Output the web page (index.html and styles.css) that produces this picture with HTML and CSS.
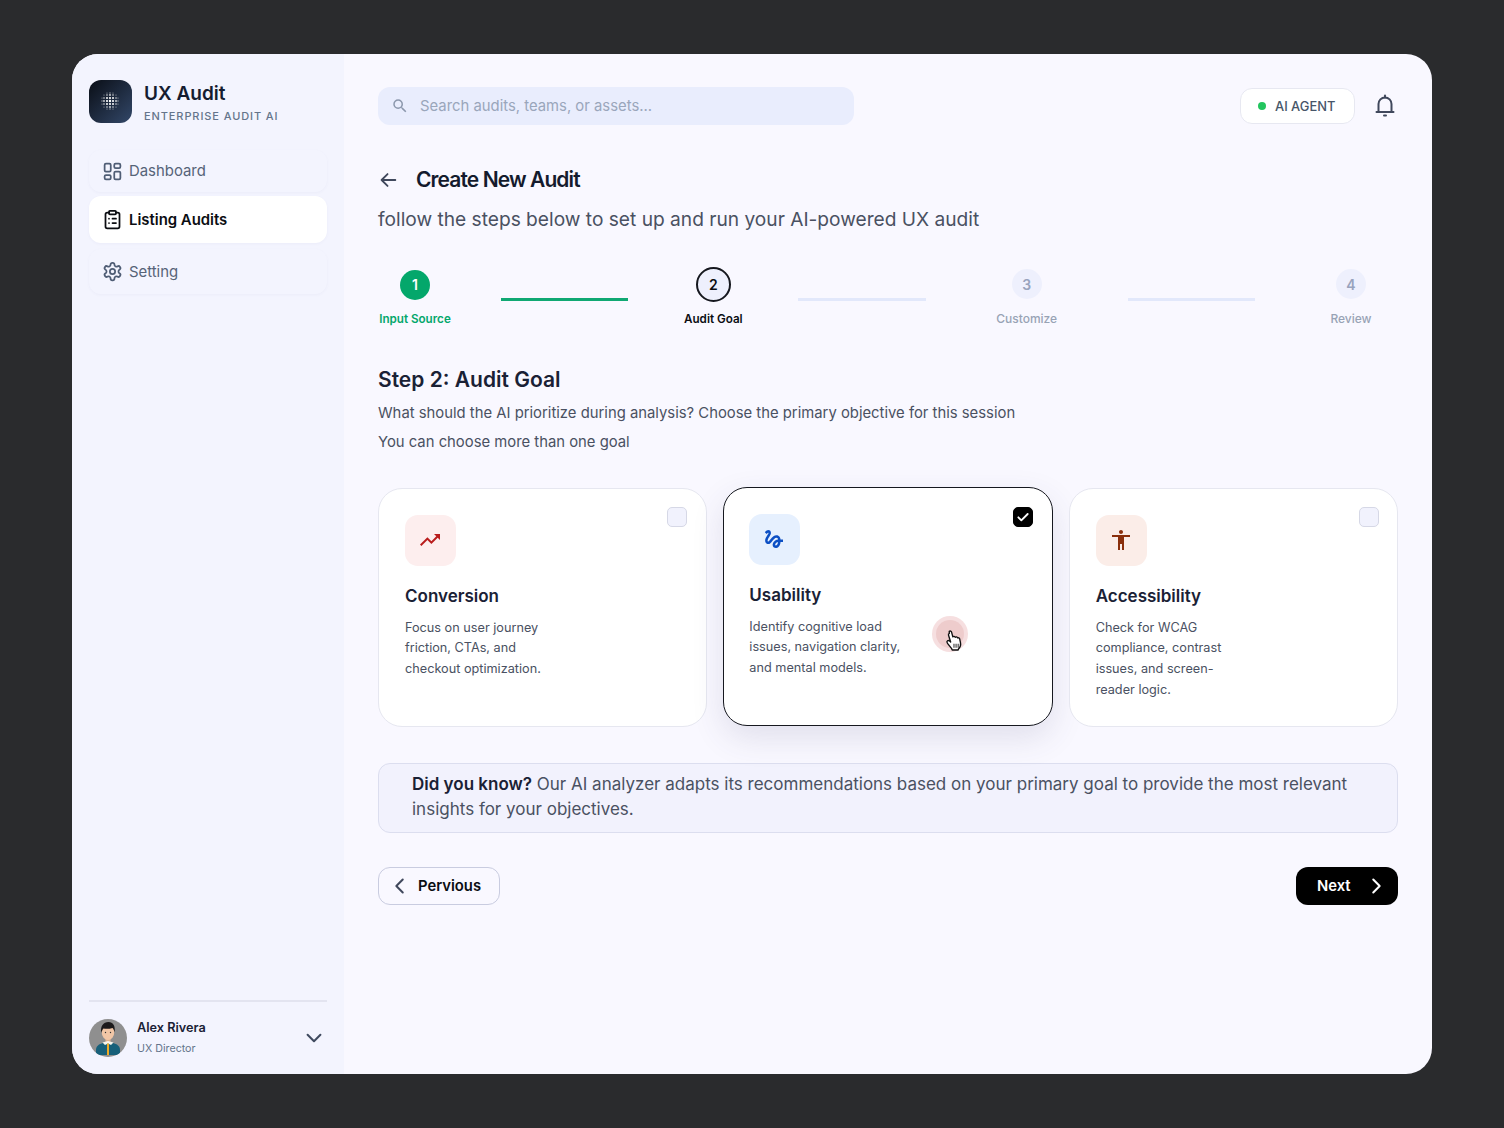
FILE: index.html
```html
<!DOCTYPE html>
<html lang="en">
<head>
<meta charset="utf-8">
<title>UX Audit</title>
<link rel="stylesheet" href="styles.css">
</head>
<body>
<div class="app">
  <aside class="sidebar">
    <div class="brand">
      <div class="logo">
        <svg width="20" height="20" viewBox="0 0 20 20" fill="#fff">
          <g opacity=".6"><circle cx="7" cy="2" r=".6"/><circle cx="10" cy="2" r=".7"/><circle cx="13" cy="2" r=".6"/><circle cx="4" cy="4" r=".6"/><circle cx="16" cy="4" r=".6"/><circle cx="2" cy="7" r=".6"/><circle cx="18" cy="7" r=".6"/><circle cx="2" cy="10" r=".7"/><circle cx="18" cy="10" r=".7"/><circle cx="2" cy="13" r=".6"/><circle cx="18" cy="13" r=".6"/><circle cx="4" cy="16" r=".6"/><circle cx="16" cy="16" r=".6"/><circle cx="7" cy="18" r=".6"/><circle cx="10" cy="18" r=".7"/><circle cx="13" cy="18" r=".6"/></g>
          <g opacity=".85"><circle cx="7" cy="4" r=".8"/><circle cx="10" cy="4" r=".9"/><circle cx="13" cy="4" r=".8"/><circle cx="4" cy="7" r=".8"/><circle cx="16" cy="7" r=".8"/><circle cx="4" cy="10" r=".9"/><circle cx="16" cy="10" r=".9"/><circle cx="4" cy="13" r=".8"/><circle cx="16" cy="13" r=".8"/><circle cx="7" cy="16" r=".8"/><circle cx="10" cy="16" r=".9"/><circle cx="13" cy="16" r=".8"/></g>
          <circle cx="7" cy="7" r="1"/><circle cx="10" cy="7" r="1.1"/><circle cx="13" cy="7" r="1"/><circle cx="7" cy="10" r="1.1"/><circle cx="10" cy="10" r="1.2"/><circle cx="13" cy="10" r="1.1"/><circle cx="7" cy="13" r="1"/><circle cx="10" cy="13" r="1.1"/><circle cx="13" cy="13" r="1"/>
        </svg>
      </div>
      <div class="brand-text">
        <div class="brand-name">UX Audit</div>
        <div class="brand-sub">ENTERPRISE AUDIT AI</div>
      </div>
    </div>
    <nav class="nav">
      <a class="nav-item nav-dash">
        <svg class="nav-icon" viewBox="0 0 24 24"><rect x="3" y="3" width="7" height="9" rx="1.5"/><rect x="14" y="3" width="7" height="5" rx="1.5"/><rect x="14" y="12" width="7" height="9" rx="1.5"/><rect x="3" y="16" width="7" height="5" rx="1.5"/></svg>
        <span>Dashboard</span>
      </a>
      <a class="nav-item nav-active">
        <svg class="nav-icon" viewBox="0 0 24 24"><rect x="8" y="2" width="8" height="4" rx="1"/><path d="M16 4h2a2 2 0 0 1 2 2v14a2 2 0 0 1-2 2H6a2 2 0 0 1-2-2V6a2 2 0 0 1 2-2h2"/><path d="M12 11h4M12 16h4M8 11h.01M8 16h.01"/></svg>
        <span>Listing Audits</span>
      </a>
      <a class="nav-item nav-set">
        <svg class="nav-icon" viewBox="0 0 24 24"><path d="M12.22 2h-.44a2 2 0 0 0-2 2v.18a2 2 0 0 1-1 1.73l-.43.25a2 2 0 0 1-2 0l-.15-.08a2 2 0 0 0-2.73.73l-.22.38a2 2 0 0 0 .73 2.73l.15.1a2 2 0 0 1 1 1.72v.51a2 2 0 0 1-1 1.74l-.15.09a2 2 0 0 0-.73 2.73l.22.38a2 2 0 0 0 2.73.73l.15-.08a2 2 0 0 1 2 0l.43.25a2 2 0 0 1 1 1.73V20a2 2 0 0 0 2 2h.44a2 2 0 0 0 2-2v-.18a2 2 0 0 1 1-1.73l.43-.25a2 2 0 0 1 2 0l.15.08a2 2 0 0 0 2.73-.73l.22-.39a2 2 0 0 0-.73-2.73l-.15-.08a2 2 0 0 1-1-1.74v-.5a2 2 0 0 1 1-1.74l.15-.09a2 2 0 0 0 .73-2.73l-.22-.38a2 2 0 0 0-2.73-.73l-.15.08a2 2 0 0 1-2 0l-.43-.25a2 2 0 0 1-1-1.73V4a2 2 0 0 0-2-2z"/><circle cx="12" cy="12" r="3"/></svg>
        <span>Setting</span>
      </a>
    </nav>
    <div class="user">
      <svg class="avatar" viewBox="0 0 38 38">
        <defs><clipPath id="av"><circle cx="19" cy="19" r="19"/></clipPath></defs>
        <g clip-path="url(#av)">
          <rect width="38" height="38" fill="#8f8f8f"/>
          <path d="M7 36v-5c0-4 3-6 7-7l5-1 5 1c4 1 7 3 7 7v5z" fill="#17607a"/>
          <rect x="16.500" y="18" width="5" height="5" fill="#e2b08f"/>
          <path d="M13.500 23.500l5.500-1.500 5.500 1.500-2.500 2.500L19 24.500 16 26z" fill="#f7f4ec"/>
          <rect x="18" y="24.500" width="2" height="11.500" fill="#efab26"/>
          <ellipse cx="19" cy="13" rx="6.300" ry="8" fill="#f1c6a6"/>
          <path d="M12.300 14c-1.200-7 2-11 7.200-11 4.500 0 7 3.500 6.200 10.500-.5-2-1.200-3.500-2.200-4.500-3 1-7 1-9 .5-1 1-1.700 2.500-2.200 4.500z" fill="#1c1a1b"/>
          <circle cx="16.500" cy="13.500" r=".7" fill="#333"/><circle cx="21.500" cy="13.500" r=".7" fill="#333"/>
        </g>
      </svg>
      <div class="user-text">
        <div class="user-name">Alex Rivera</div>
        <div class="user-role">UX Director</div>
      </div>
      <svg class="user-chev" viewBox="0 0 24 24"><path d="M5 8.500l7 7 7-7"/></svg>
    </div>
  </aside>

  <main class="main">
    <header class="topbar">
      <div class="search">
        <svg class="search-icon" viewBox="0 0 24 24"><path d="M15.500 14h-.79l-.28-.27A6.470 6.470 0 0 0 16 9.500 6.500 6.500 0 1 0 9.500 16c1.610 0 3.090-.59 4.230-1.570l.27.28v.79l5 4.990L20.490 19l-4.990-5zm-6 0C7.010 14 5 11.990 5 9.500S7.010 5 9.500 5 14 7.010 14 9.500 11.990 14 9.500 14z"/></svg>
        <span>Search audits, teams, or assets...</span>
      </div>
      <div class="top-right">
        <div class="agent"><i class="agent-dot"></i>AI AGENT</div>
        <svg class="bell" viewBox="0 0 24 24"><path d="M5.500 17.500V10a6.500 6.500 0 0 1 13 0v7.500"/><path d="M3.500 18h17"/><path d="M12 1.500v2"/><path d="M11 21.500h2"/></svg>
      </div>
    </header>

    <div class="title-row">
      <svg class="back" viewBox="0 0 24 24"><path d="M20 12H5M11.500 5.500L5 12l6.500 6.500"/></svg>
      <h1>Create New Audit</h1>
    </div>
    <p class="subtitle">follow the steps below to set up and run your AI-powered UX audit</p>

    <div class="stepper">
      <div class="step step-a done"><div class="dot-wrap"><div class="dot">1</div></div><div class="step-label">Input Source</div></div>
      <div class="line line-done"></div>
      <div class="step step-b current"><div class="dot-wrap"><div class="dot">2</div></div><div class="step-label">Audit Goal</div></div>
      <div class="line"></div>
      <div class="step step-c"><div class="dot-wrap"><div class="dot">3</div></div><div class="step-label">Customize</div></div>
      <div class="line"></div>
      <div class="step step-d"><div class="dot-wrap"><div class="dot">4</div></div><div class="step-label">Review</div></div>
    </div>

    <h2>Step 2: Audit Goal</h2>
    <p class="lead">What should the AI prioritize during analysis? Choose the primary objective for this session</p>
    <p class="lead lead-2">You can choose more than one goal</p>

    <div class="cards">
      <article class="card">
        <span class="check"></span>
        <div class="card-icon icon-red"><svg viewBox="0 0 24 24"><path d="M16 6l2.290 2.290-4.880 4.880-4-4L2 16.590 3.410 18l6-6 4 4 6.300-6.290L22 12V6z"/></svg></div>
        <h3>Conversion</h3>
        <p>Focus on user journey friction, CTAs, and checkout optimization.</p>
      </article>
      <article class="card card-selected">
        <span class="check check-on"><svg viewBox="0 0 24 24"><path d="M5 12.500l4.500 4.500L19 7.500"/></svg></span>
        <div class="card-icon icon-blue"><svg viewBox="0 0 24 24"><path d="M4.590 6.890c.7-.71 1.400-1.350 1.710-1.220.5.2 0 1.030-.3 1.520-.25.42-2.860 3.890-2.860 6.310 0 1.280.48 2.340 1.340 2.980.75.56 1.740.73 2.640.46 1.070-.31 1.950-1.400 3.060-2.770 1.210-1.490 2.830-3.440 4.080-3.440 1.630 0 1.650 1.010 1.760 1.790-3.780.64-5.380 3.670-5.380 5.370 0 1.700 1.440 3.090 3.210 3.090 1.630 0 4.290-1.330 4.690-6.100H21v-2.500h-2.470c-.15-1.650-1.090-4.200-4.030-4.200-2.250 0-4.180 1.910-4.940 2.840-.58.73-2.060 2.480-2.290 2.720-.25.3-.68.84-1.110.84-.45 0-.72-.83-.36-1.920.35-1.090 1.400-2.860 1.850-3.520.78-1.140 1.300-1.920 1.300-3.280C8.950 3.690 7.310 3 6.440 3 5.120 3 3.970 4 3.720 4.250c-.36.36-.66.66-.88.93l1.750 1.710zm9.290 11.660c-.31 0-.74-.26-.74-.72 0-.6.730-2.200 2.870-2.760-.3 2.690-1.430 3.480-2.130 3.480z"/></svg></div>
        <h3>Usability</h3>
        <p>Identify cognitive load issues, navigation clarity, and mental models.</p>
        <div class="ripple">
          <svg class="cursor" viewBox="0 0 20 22"><path d="M5 2.200c.8-.6 1.900-.2 2.200.8l1.200 4.500c.5-.7 1.900-.6 2.300.4.600-.6 1.900-.4 2.200.6.700-.4 1.800-.1 2 .8l.9 4.200c.4 2-.4 4-2 5.600l-.3 1H7.800l-.5-1.300-4-5c-.7-.9-.7-1.900 0-2.500.6-.5 1.600-.3 2.300.4l.7.800-2-6.500c-.3-.9 0-1.500.7-1.800z" fill="#fff" stroke="#111" stroke-width="1.300" stroke-linejoin="round"/><path d="M9.500 14v4M11.500 14v4M13.500 14v4" stroke="#333" stroke-width="1"/></svg>
        </div>
      </article>
      <article class="card">
        <span class="check"></span>
        <div class="card-icon icon-brown"><svg viewBox="0 0 24 24"><path d="M12 2c1.100 0 2 .9 2 2s-.9 2-2 2-2-.9-2-2 .9-2 2-2zm9 7h-6v13h-2v-6h-2v6H9V9H3V7h18v2z"/></svg></div>
        <h3>Accessibility</h3>
        <p>Check for WCAG compliance, contrast issues, and screen-reader logic.</p>
      </article>
    </div>

    <div class="tip"><b>Did you know?</b> Our AI analyzer adapts its recommendations based on your primary goal to provide the most relevant insights for your objectives.</div>

    <div class="actions">
      <button class="btn btn-prev"><svg viewBox="0 0 24 24"><path d="M15 5l-7 7 7 7"/></svg>Pervious</button>
      <button class="btn btn-next">Next<svg viewBox="0 0 24 24"><path d="M9 5l7 7-7 7"/></svg></button>
    </div>
  </main>
</div>
</body>
</html>
```

FILE: styles.css
```css
* { box-sizing: border-box; }
html, body { margin: 0; height: 100%; }
body {
  background: #2a2b2d;
  font-family: Inter, "Liberation Sans", sans-serif;
  color: #111827;
  padding: 54px 72px;
  -webkit-font-smoothing: antialiased;
}
h1, h2, h3, p { margin: 0; }

.app {
  width: 1360px;
  height: 1020px;
  display: flex;
  border-radius: 26px;
  overflow: hidden;
  background: #f9f8ff;
}

/* Sidebar */
.sidebar {
  width: 272px;
  flex: none;
  background: #f3f4fe;
  padding: 26px 17px 17px;
  display: flex;
  flex-direction: column;
}
.brand { display: flex; align-items: center; gap: 12px; height: 43px; }
.logo {
  width: 43px;
  height: 43px;
  border-radius: 12px;
  background: linear-gradient(135deg, #0a0e16 0%, #324768 100%);
  display: flex;
  align-items: center;
  justify-content: center;
  padding: 0 1px 1px 0;
}
.brand-text { padding-top: 2px; }
.brand-name { font-size: 19px; line-height: 24px; font-weight: 600; color: #151c30; }
.brand-sub { font-size: 11px; line-height: 14px; margin-top: 3px; font-weight: 500; letter-spacing: .9px; color: #64748b; }

.nav { margin-top: 27px; display: flex; flex-direction: column; }
.nav-item {
  display: flex;
  align-items: center;
  gap: 6px;
  padding-left: 13px;
  border-radius: 12px;
  font-size: 14.900px;
  color: #566378;
  box-shadow: 0 1px 3px rgba(90, 100, 160, .05);
}
.nav-dash { height: 42px; }
.nav-active { height: 47px; margin-top: 4px; background: #fff; color: #0b0d12; font-weight: 600; }
.nav-set { height: 45px; margin-top: 6px; }
.nav-icon { width: 21px; height: 21px; flex: none; fill: none; stroke: #4f5d75; stroke-width: 2; stroke-linecap: round; stroke-linejoin: round; }
.nav-active .nav-icon { stroke: #0b0d12; }

.user {
  margin-top: auto;
  border-top: 2px solid #e3e4f0;
  padding-top: 17px;
  display: flex;
  align-items: center;
  gap: 10px;
}
.avatar { width: 38px; height: 38px; flex: none; }
.user-text { flex: 1; padding-bottom: 1px; }
.user-name { font-size: 12.700px; line-height: 16px; font-weight: 600; color: #1a2135; }
.user-role { font-size: 10.700px; line-height: 14px; margin-top: 6px; color: #64748b; }
.user-chev { width: 22px; height: 22px; margin-right: 2px; fill: none; stroke: #3f4a5f; stroke-width: 2.200; stroke-linecap: round; stroke-linejoin: round; }

/* Main */
.main { flex: 1; min-width: 0; padding: 33px 34px 0; }
.topbar { display: flex; align-items: center; justify-content: space-between; height: 38px; }
.search {
  width: 476px;
  height: 38px;
  border-radius: 12px;
  background: #e9edfd;
  display: flex;
  align-items: center;
  gap: 11px;
  padding: 0 0 1px 13px;
  font-size: 14.850px;
  color: #9aa6bb;
}
.search-icon { width: 18px; height: 18px; fill: #8c98ad; flex: none; }
.top-right { display: flex; align-items: center; gap: 18px; margin-right: 1px; }
.agent {
  width: 115px;
  height: 36px;
  border-radius: 12px;
  background: #fff;
  border: 1px solid #e7e8f1;
  display: flex;
  align-items: center;
  gap: 9px;
  padding-left: 17px;
  font-size: 12.900px;
  font-weight: 500;
  color: #475569;
}
.agent-dot { width: 8px; height: 8px; border-radius: 50%; background: #22c55e; }
.bell { width: 24px; height: 24px; fill: none; stroke: #40485c; stroke-width: 2; stroke-linecap: round; stroke-linejoin: round; }

.title-row { display: flex; align-items: center; gap: 17px; margin-top: 39px; height: 32px; }
.back { width: 22px; height: 22px; margin-left: -1px; fill: none; stroke: #40485c; stroke-width: 2; stroke-linecap: round; stroke-linejoin: round; }
h1 { font-size: 21px; line-height: 32px; font-weight: 600; letter-spacing: -.9px; color: #141b2d; }
.subtitle { margin-top: 9px; font-size: 19.150px; line-height: 28px; color: #4a5162; }

.stepper { display: flex; align-items: flex-start; gap: 49px; margin-top: 34px; }
.step { flex: none; display: flex; flex-direction: column; align-items: center; }
.step-a { width: 74px; }
.step-b { width: 72px; }
.step-c { width: 104px; }
.step-d { width: 94px; }
.dot-wrap { height: 35px; display: flex; align-items: center; justify-content: center; }
.step-c .dot-wrap, .step-d .dot-wrap { padding-bottom: 1px; }
.dot {
  width: 30px;
  height: 30px;
  border-radius: 50%;
  background: #eef0fd;
  color: #98a3bd;
  font-size: 14px;
  font-weight: 600;
  display: flex;
  align-items: center;
  justify-content: center;
}
.done .dot { background: #04a76b; color: #fff; }
.current .dot { width: 35px; height: 35px; border: 2px solid #16181f; color: #0b0d12; }
.step-label { margin-top: 8px; font-size: 12px; line-height: 18px; font-weight: 500; color: #98a3b5; white-space: nowrap; }
.done .step-label { color: #04a76b; font-weight: 600; font-size: 11.650px; }
.current .step-label { color: #0b0d12; font-weight: 600; font-size: 11.650px; }
.line { flex: 1; height: 2.500px; margin-top: 31px; background: #e2e8fb; }
.line-done { background: #10a873; }

h2 { margin-top: 37px; font-size: 21px; line-height: 30px; font-weight: 600; color: #1a2135; }
.lead { margin-top: 7px; font-size: 14.840px; line-height: 22px; color: #4a5162; }
.lead-2 { margin-top: 7px; }

.cards { display: grid; grid-template-columns: repeat(3, 1fr); gap: 16px; margin-top: 35px; }
.card {
  position: relative;
  height: 239px;
  padding: 26px;
  background: #fff;
  border: 1px solid #e6e7f0;
  border-radius: 24px;
}
.card-selected {
  padding-left: 25px;
  border-color: #16181f;
  transform: translateY(-1px);
  box-shadow: 0 12px 32px rgba(60, 65, 110, .13);
}
.check {
  position: absolute;
  top: 18px;
  right: 19px;
  width: 20px;
  height: 20px;
  border-radius: 5px;
  background: #f1f2fd;
  border: 1px solid #d6d8e6;
}
.card:last-child .check { right: 18px; }
.check-on { top: 19px; background: #000; border-color: #000; display: flex; align-items: center; justify-content: center; }
.check-on svg { width: 16px; height: 16px; fill: none; stroke: #fff; stroke-width: 2.800; stroke-linecap: round; stroke-linejoin: round; }
.card-icon { width: 51px; height: 51px; border-radius: 13px; display: flex; align-items: center; justify-content: center; }
.card-icon svg { width: 24px; height: 24px; margin: 0 2px 2px 0; }
.icon-red { background: #fdeeee; }
.icon-red svg { fill: #b91c1c; }
.icon-blue { background: #e6f0fe; }
.icon-blue svg { fill: #0c4fc4; }
.icon-brown { background: #fbede8; }
.icon-brown svg { fill: #8a2f0c; margin: 0 1px 2px 0; }
.card h3 { margin-top: 18px; font-size: 17px; line-height: 24px; font-weight: 600; color: #1a2135; }
.card p { margin-top: 9.500px; width: 155px; font-size: 12.700px; line-height: 20.800px; color: #4a5162; }
.ripple {
  position: absolute;
  left: 208px;
  top: 128px;
  width: 36px;
  height: 36px;
  border-radius: 50%;
  background: #f6dfe0;
}
.ripple::before {
  content: "";
  position: absolute;
  inset: 4px;
  border-radius: 50%;
  background: #eecccc;
}
.cursor { position: absolute; left: 12px; top: 13px; width: 21px; height: 23px; }

.tip {
  margin-top: 36px;
  height: 70px;
  padding: 8px 33px 0;
  background: #f2f2fd;
  border: 1px solid #dcdeef;
  border-radius: 12px;
  font-size: 17px;
  line-height: 25px;
  color: #4a5162;
}
.tip b { font-weight: 600; color: #1a2135; }

.actions { display: flex; justify-content: space-between; margin-top: 34px; }
.btn {
  height: 38px;
  border-radius: 12px;
  font: 600 14.800px Inter, "Liberation Sans", sans-serif;
  display: flex;
  align-items: center;
  padding: 0;
  cursor: pointer;
}
.btn svg { width: 22px; height: 22px; fill: none; stroke-width: 2.200; stroke-linecap: round; stroke-linejoin: round; }
.btn-prev { width: 122px; gap: 7px; padding-left: 10px; background: transparent; border: 1px solid #c9cce0; color: #0b0d12; }
.btn-prev svg { stroke: #40485c; }
.btn-next { width: 102px; gap: 14px; padding-left: 21px; background: #000; border: 0; color: #fff; }
.btn-next svg { stroke: #fff; }
```
